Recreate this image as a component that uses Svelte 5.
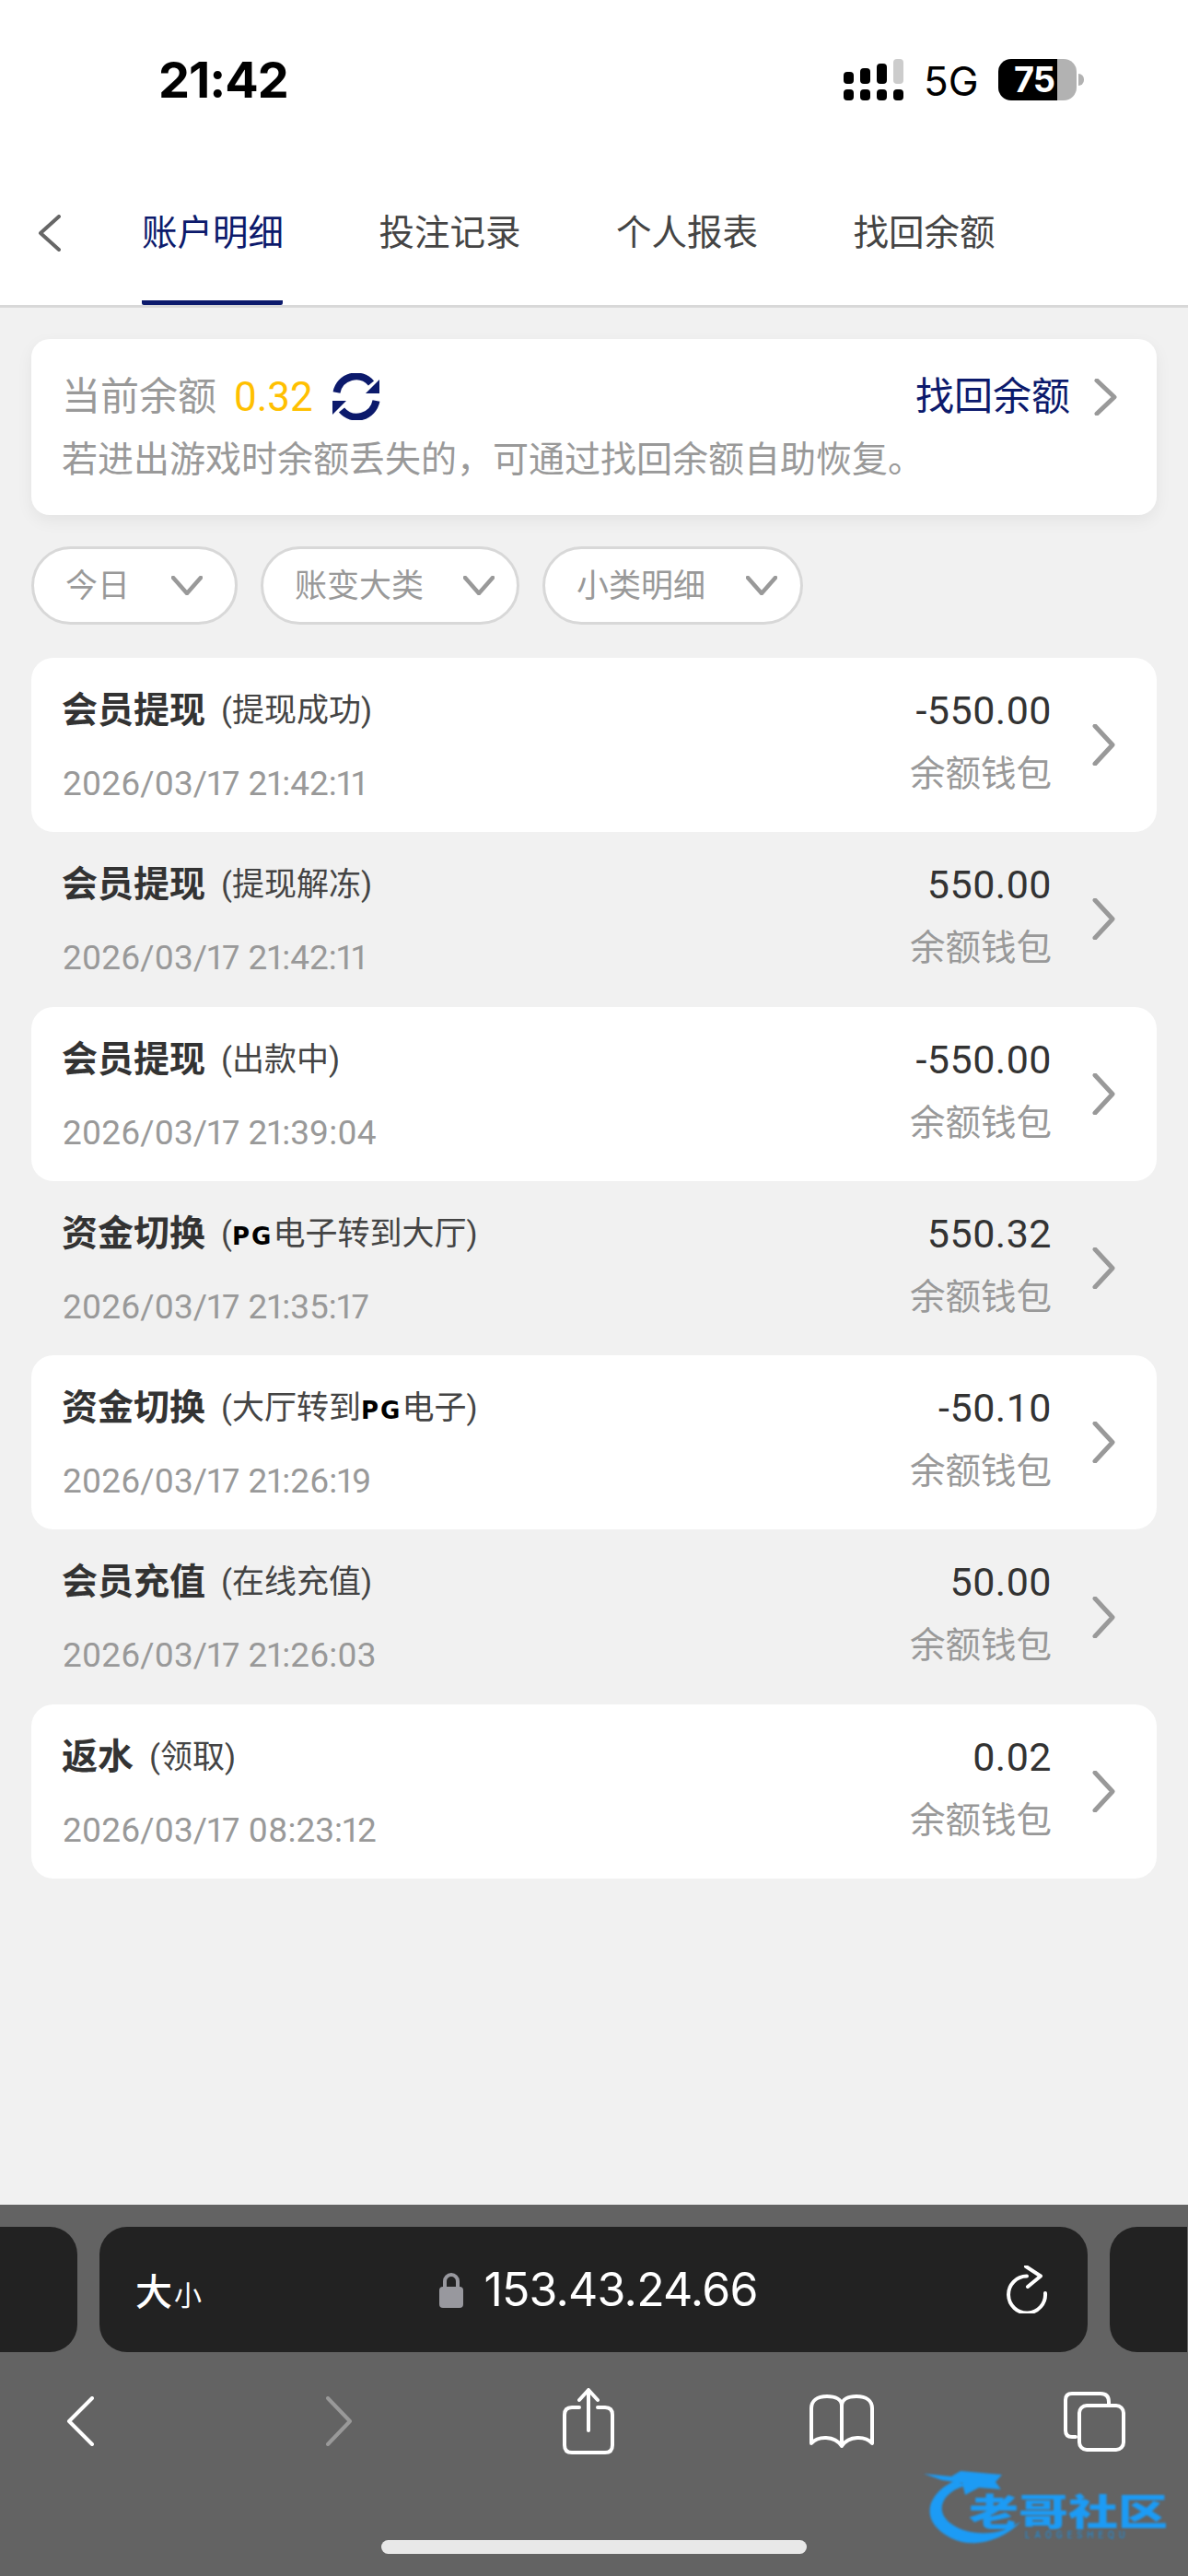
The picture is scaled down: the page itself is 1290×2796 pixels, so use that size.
<script>
	const tabs = ['账户明细', '投注记录', '个人报表', '找回余额'];
	const filters = [
		{ label: '今日', cls: 'f1' },
		{ label: '账变大类', cls: 'f2' },
		{ label: '小类明细', cls: 'f3' }
	];
	const rows = [
		{ title: '会员提现', sub: ['提现成功'], date: '2026/03/17 21:42:11', amount: '-550.00' },
		{ title: '会员提现', sub: ['提现解冻'], date: '2026/03/17 21:42:11', amount: '550.00' },
		{ title: '会员提现', sub: ['出款中'], date: '2026/03/17 21:39:04', amount: '-550.00' },
		{ title: '资金切换', sub: ['', '电子转到大厅'], date: '2026/03/17 21:35:17', amount: '550.32' },
		{ title: '资金切换', sub: ['大厅转到', '电子'], date: '2026/03/17 21:26:19', amount: '-50.10' },
		{ title: '会员充值', sub: ['在线充值'], date: '2026/03/17 21:26:03', amount: '50.00' },
		{ title: '返水', sub: ['领取'], date: '2026/03/17 08:23:12', amount: '0.02' }
	];
	const upperBars = [13, 17, 22, 27];
</script>

<div class="page">
	<header class="top">
		<div class="status">
			<span class="time">21:42</span>
			<div class="signal">
				<div class="bars">
					{#each upperBars as h, i}
						<i class:dim={i === 3} style="height: {h}px"></i>
					{/each}
				</div>
				<div class="dots"><i></i><i></i><i></i><i></i></div>
			</div>
			<span class="net">5G</span>
			<div class="battery"><span>75</span></div>
			<div class="nub"></div>
		</div>
		<nav class="tabs">
			<svg class="back" width="25" height="40" viewBox="0 0 25 40"><path d="M23 2 L3 20 L23 38" /></svg>
			{#each tabs as tab, i}
				<div class="tab" class:active={i === 0}>{tab}</div>
			{/each}
		</nav>
	</header>

	<main class="content">
		<section class="balance">
			<div class="balance-top">
				<span class="bal-label">当前余额</span>
				<span class="bal-value">0.32</span>
				<svg class="sync" width="52" height="51" viewBox="0 0 52 51">
					<path class="arc" d="M4.5 21 A21.5 21.5 0 0 1 42 11" />
					<path class="arc" d="M47.5 30 A21.5 21.5 0 0 1 10 40" />
					<path class="head" d="M51 7 V22 H36 Z" />
					<path class="head" d="M0 45 V30 H15 Z" />
				</svg>
				<span class="recover">找回余额</span>
				<svg class="chev" width="26" height="40" viewBox="0 0 26 40"><path d="M4 2 L23 20 L4 38" /></svg>
			</div>
			<p class="hint">若进出游戏时余额丢失的，可通过找回余额自助恢复。</p>
		</section>

		<div class="filters">
			{#each filters as f}
				<div class="filter {f.cls}">
					<span>{f.label}</span>
					<svg width="34" height="21" viewBox="0 0 34 21"><path d="M2 2 L17 19 L32 2" /></svg>
				</div>
			{/each}
		</div>

		<div class="list">
			{#each rows as row, i}
				<div class="row" class:white={i % 2 === 0}>
					<div class="left">
						<div class="title-line">
							<b>{row.title}</b>
							<span class="sub">({row.sub[0]}{#if row.sub.length > 1}<em class="pg">PG</em>{row.sub[1]}{/if})</span>
						</div>
						<div class="date">{row.date}</div>
					</div>
					<div class="right">
						<div class="amount">{row.amount}</div>
						<div class="wallet">余额钱包</div>
					</div>
					<svg class="chev" width="26" height="45" viewBox="0 0 26 45"><path d="M4 2 L23 22.5 L4 43" /></svg>
				</div>
			{/each}
		</div>
	</main>

	<footer class="safari">
		<div class="address-row">
			<div class="side-tab left-tab"></div>
			<div class="address">
				<div class="aa"><span class="big">大</span><span class="small">小</span></div>
				<div class="url">
					<svg width="26" height="39" viewBox="0 0 26 39">
						<path class="shackle" d="M6 18 V10 A7 7 0 0 1 20 10 V18" />
						<rect y="16" width="26" height="23" rx="4" fill="#98989e" />
					</svg>
					<span>153.43.24.66</span>
				</div>
				<svg class="reload" width="45" height="52" viewBox="0 0 45 52">
					<path d="M22 11.5 A20 20 0 1 0 42 30" />
					<path d="M21 1 L37 11.5 L23 23" />
				</svg>
			</div>
			<div class="side-tab right-tab"></div>
		</div>

		<div class="tools">
			<svg class="t-back" width="30" height="54" viewBox="0 0 30 54"><path d="M28 2 L3 27 L28 52" /></svg>
			<svg class="t-fwd" width="29" height="54" viewBox="0 0 29 54"><path d="M2 2 L26 27 L2 52" /></svg>
			<svg class="t-share" width="56" height="72" viewBox="0 0 56 72">
				<path d="M18 21 H10 Q2 21 2 29 V62 Q2 70 10 70 H46 Q54 70 54 62 V29 Q54 21 46 21 H38" />
				<path d="M28 3 V46 M18 13 L28 2 L38 13" />
			</svg>
			<svg class="t-book" width="72" height="59" viewBox="0 0 72 59">
				<path d="M36 12 C36 5 29 2 20 2 C9 2 3 7 3 15 V53 C10 45 28 44 36 56 C44 44 62 45 69 53 V15 C69 7 63 2 52 2 C43 2 36 5 36 12 V56" />
			</svg>
			<svg class="t-tabs" width="68" height="66" viewBox="0 0 68 66">
				<path d="M14 50 H10 Q3 50 3 43 V10 Q3 3 10 3 H41 Q50 3 50 12 V16" />
				<rect x="18" y="16" width="48" height="48" rx="8" />
			</svg>
		</div>

		<div class="home"></div>

		<div class="mark">
			<svg width="270" height="85" viewBox="0 0 270 85">
				<path d="M35 12 C5 25 -8 55 30 75 C55 88 90 75 105 57 C85 72 50 75 28 58 C12 45 20 25 45 18 Z" />
				<path d="M0 5 L30 8 L40 2 L85 6 L78 14 L84 22 L60 20 L45 28 L42 15 L20 12 Z" />
			</svg>
			<span class="mark-cn">老哥社区</span>
			<span class="mark-en">LAOGESHEQU</span>
		</div>
	</footer>
</div>

<style>
	:global(body) {
		margin: 0;
		background: #f1f1f1;
	}

	.page {
		width: 1290px;
		height: 2796px;
		display: flex;
		flex-direction: column;
		font-family: Roboto, "Noto Sans CJK SC", sans-serif;
		color: #333;
		overflow: hidden;
	}

	svg {
		display: block;
		flex-shrink: 0;
	}

	svg path {
		fill: none;
		stroke-linecap: round;
		stroke-linejoin: round;
	}

	.top {
		background: #fff;
		border-bottom: 3px solid #d8d8d8;
	}

	.status {
		height: 183px;
		display: flex;
		align-items: flex-start;
		color: #000;
	}

	.time {
		margin: 57px 0 0 172px;
		font: 700 54px/60px "Inter", sans-serif;
		letter-spacing: -1px;
		width: 744px;
	}

	.signal {
		margin-top: 64px;
		width: 65px;
	}

	.bars,
	.dots {
		display: flex;
		justify-content: space-between;
	}

	.bars {
		height: 27px;
		align-items: flex-end;
		margin-bottom: 6px;
	}

	.bars i,
	.dots i {
		display: block;
		width: 11px;
		background: #000;
		border-radius: 4px;
	}

	.bars i.dim {
		background: #ccc;
	}

	.dots i {
		height: 12px;
	}

	.net {
		margin: 60px 0 0 22px;
		font: 400 44px/56px "Inter", sans-serif;
		width: 57px;
	}

	.battery {
		margin: 64px 0 0 24px;
		width: 85px;
		height: 45px;
		border-radius: 14px;
		background: linear-gradient(90deg, #000 64px, #b2b2b2 64px);
	}

	.battery span {
		display: block;
		padding-left: 17px;
		font: 700 38px/45px "Inter", sans-serif;
		letter-spacing: -1px;
		color: #fff;
	}

	.nub {
		margin: 80px 0 0 2px;
		width: 6px;
		height: 13px;
		border-radius: 0 6px 6px 0;
		background: #b2b2b2;
	}

	.tabs {
		height: 148px;
		display: flex;
		position: relative;
		padding-left: 154px;
		gap: 104.5px;
	}

	.back {
		position: absolute;
		left: 41px;
		top: 50px;
	}

	.back path {
		stroke: #666;
		stroke-width: 4;
	}

	.tab {
		width: 153px;
		box-sizing: border-box;
		height: 148px;
		padding-top: 40px;
		font-size: 38.5px;
		line-height: 60px;
		color: #444;
		border-bottom: 5px solid transparent;
		white-space: nowrap;
	}

	.tab.active {
		color: #0c1a6c;
		border-bottom-color: #0c1a6c;
		border-radius: 0 0 2px 2px;
	}

	.content {
		flex: 1;
		padding: 34px 34px 0;
	}

	.balance {
		height: 191px;
		box-sizing: border-box;
		padding: 38px 34px 0 33px;
		background: #fff;
		border-radius: 20px;
		box-shadow: 0 6px 18px rgba(0, 0, 0, 0.06);
	}

	.balance-top {
		height: 50px;
		display: flex;
		align-items: center;
	}

	.bal-label {
		font-size: 42px;
		line-height: 50px;
		color: #999;
	}

	.bal-value {
		margin-left: 19px;
		font-size: 44px;
		line-height: 50px;
		color: #ffc000;
	}

	.sync {
		margin: -2px 0 0 21px;
	}

	.sync .arc {
		stroke: #0c1a6c;
		stroke-width: 8;
		stroke-linecap: butt;
	}

	.sync .head {
		fill: #0c1a6c;
	}

	.recover {
		margin-left: auto;
		font-size: 42px;
		line-height: 50px;
		color: #0c1a6c;
	}

	.balance-top .chev {
		margin: 0 9px 0 25px;
	}

	.chev path {
		stroke: #999;
		stroke-width: 5;
	}

	.hint {
		margin: 18px 0 0;
		font-size: 39px;
		line-height: 50px;
		color: #999;
		white-space: nowrap;
	}

	.filters {
		display: flex;
		gap: 25px;
		margin-top: 34px;
	}

	.filter {
		height: 85px;
		box-sizing: border-box;
		display: flex;
		align-items: center;
		justify-content: space-between;
		padding: 0 24px 0 34px;
		background: #fff;
		border: 3px solid #d8d8d8;
		border-radius: 43px;
		font-size: 35px;
		color: #999;
	}

	.filter span {
		padding-bottom: 6px;
	}

	.f1 {
		width: 224px;
		padding-right: 35px;
	}

	.f2 {
		width: 281px;
	}

	.f3 {
		width: 283px;
		padding-right: 25px;
	}

	.filter path {
		stroke: #999;
		stroke-width: 4.5;
	}

	.list {
		margin-top: 36px;
	}

	.row {
		height: 189.3px;
		display: flex;
		align-items: center;
		padding: 0 45px 0 33px;
		border-radius: 24px;
	}

	.row.white {
		background: #fff;
	}

	.left {
		flex: 1;
		align-self: flex-start;
		padding-top: 32px;
	}

	.title-line {
		height: 50px;
		display: flex;
		align-items: center;
		white-space: nowrap;
	}

	.title-line b {
		font-size: 39px;
		line-height: 50px;
		font-weight: 700;
		color: #333;
	}

	.sub {
		margin-left: 17px;
		padding-top: 2px;
		font-size: 35px;
		line-height: 50px;
		color: #444;
	}

	.pg {
		font: 700 26px/1 "DejaVu Sans", sans-serif;
		letter-spacing: 2px;
		color: #000;
	}

	.date {
		margin: 30px 0 0 1px;
		font-size: 37px;
		line-height: 50px;
		font-variant-numeric: proportional-nums;
		color: #999;
	}

	.right {
		align-self: flex-start;
		padding-top: 32px;
		text-align: right;
	}

	.amount {
		font-size: 43px;
		line-height: 50px;
		letter-spacing: 0.5px;
		color: #333;
	}

	.wallet {
		margin-top: 19px;
		font-size: 38.5px;
		line-height: 50px;
		color: #999;
	}

	.row .chev {
		margin-left: 43px;
	}

	.safari {
		position: relative;
		height: 403px;
		box-sizing: border-box;
		padding-top: 24px;
		background: #636363;
	}

	.address-row {
		display: flex;
		gap: 24px;
		height: 136px;
	}

	.side-tab {
		background: #222;
	}

	.left-tab {
		width: 84px;
		border-radius: 0 30px 30px 0;
	}

	.right-tab {
		width: 84px;
		border-radius: 30px 0 0 30px;
	}

	.address {
		width: 1073px;
		box-sizing: border-box;
		padding: 0 43px 0 39px;
		display: grid;
		grid-template-columns: 1fr auto 1fr;
		align-items: center;
		background: #222;
		border-radius: 30px;
		color: #fff;
	}

	.aa {
		display: flex;
		align-items: flex-end;
		gap: 2px;
		height: 50px;
		font-family: "Noto Sans CJK SC", sans-serif;
	}

	.big {
		font-size: 40px;
		line-height: 50px;
		font-weight: 500;
	}

	.small {
		font-size: 30px;
		line-height: 42px;
	}

	.url {
		display: flex;
		align-items: center;
		gap: 22px;
		margin-left: 15px;
		font: 400 50px/60px "Inter", sans-serif;
		letter-spacing: -0.8px;
	}

	.shackle {
		stroke: #98989e;
		stroke-width: 4;
	}

	.reload {
		justify-self: end;
	}

	.reload path {
		stroke: #fff;
		stroke-width: 4;
	}

	.tools {
		display: flex;
		align-items: center;
		height: 80px;
		margin-top: 35px;
		padding-left: 72px;
	}

	.tools path,
	.tools rect {
		fill: none;
		stroke: #fff;
		stroke-width: 4;
	}

	.t-fwd {
		margin-left: 252px;
	}

	.t-fwd path {
		stroke: #999;
	}

	.t-share {
		margin-left: 228px;
	}

	.t-book {
		margin-left: 211px;
	}

	.t-tabs {
		margin-left: 204px;
	}

	.home {
		width: 462px;
		height: 15px;
		margin: 89px auto 0;
		border-radius: 8px;
		background: #e8e8e8;
	}

	.mark {
		position: absolute;
		left: 1003px;
		top: 287px;
		width: 270px;
		height: 85px;
		filter: blur(0.8px);
	}

	.mark path {
		fill: #1c9bf5;
	}

	.mark svg {
		position: absolute;
		inset: 0;
	}

	.mark-cn {
		position: absolute;
		left: 49px;
		top: 26px;
		font: 900 40px/36px "Noto Sans CJK SC", sans-serif;
		color: #1c9bf5;
		white-space: nowrap;
		transform: scaleX(1.35);
		transform-origin: left center;
	}

	.mark-en {
		position: absolute;
		left: 110px;
		top: 66px;
		font: 400 10px/12px Roboto, sans-serif;
		letter-spacing: 5px;
		color: #1a8fe0;
	}
</style>
